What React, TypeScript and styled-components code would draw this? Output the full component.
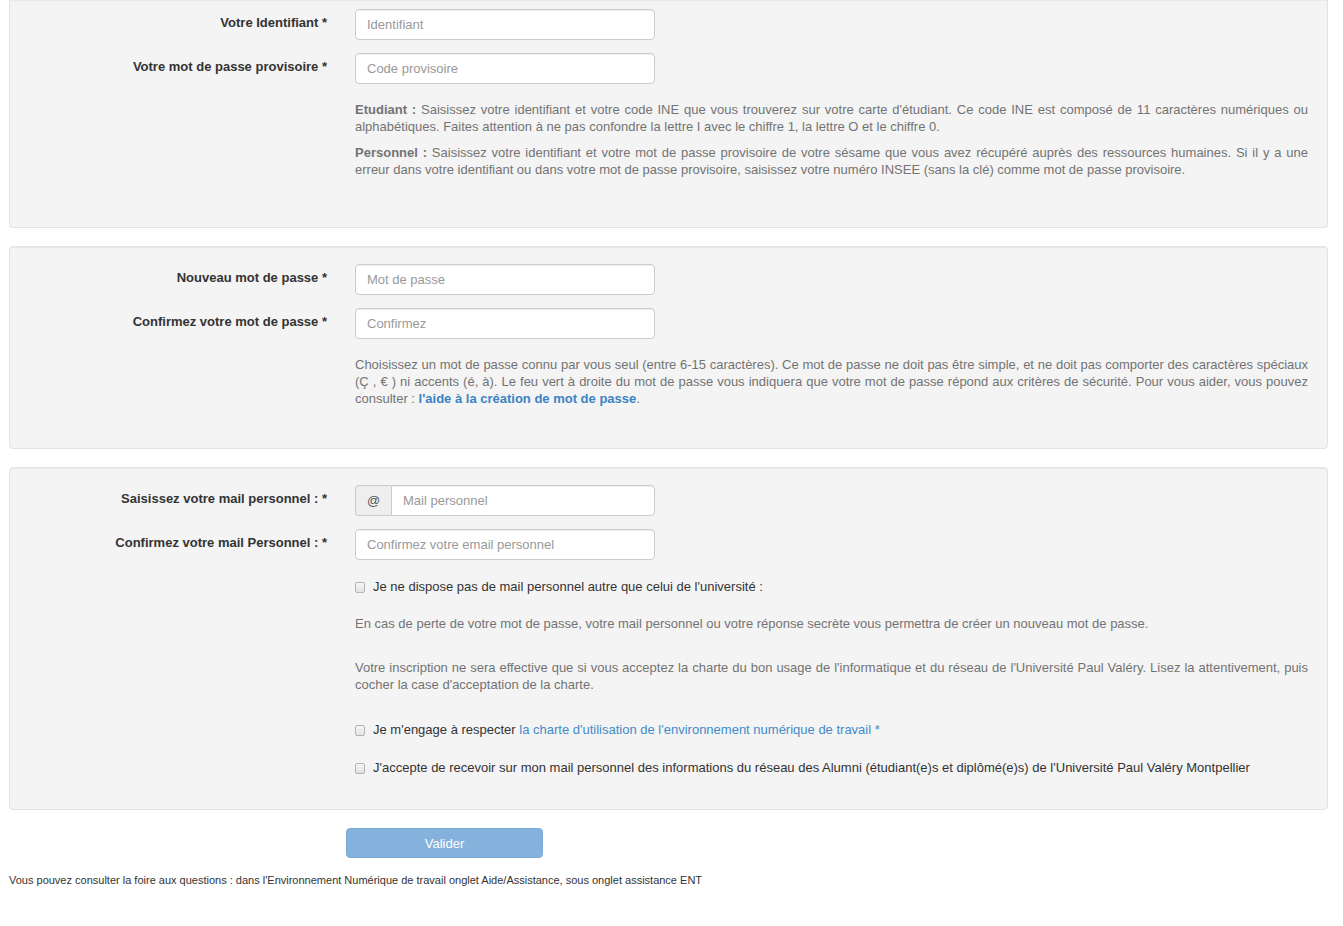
import React from "react";
import styled, { createGlobalStyle } from "styled-components";

const Global = createGlobalStyle`
  html, body { margin: 0; padding: 0; background: #fff; }
  body {
    font-family: "Liberation Sans", Arial, Helvetica, sans-serif;
    font-size: 13px;
    line-height: 17px;
    color: #333;
  }
  * { box-sizing: border-box; }
`;

const Page = styled.div`
  padding: 0 15px 0 9px;
`;

const Well = styled.div<{ $first?: boolean; $pb: number }>`
  background: #f4f4f4;
  border: 1px solid #e3e3e3;
  border-radius: 4px;
  box-shadow: inset 0 1px 1px rgba(0, 0, 0, 0.05);
  padding: 17px 19px ${(p) => p.$pb}px 19px;
  margin-bottom: 18px;
  ${(p) =>
    p.$first &&
    `
    border-top: none;
    border-top-left-radius: 0;
    border-top-right-radius: 0;
    padding-top: 9px;
  `}
`;

const Row = styled.div<{ $mb?: number }>`
  display: grid;
  grid-template-columns: 298px 1fr;
  column-gap: 28px;
  margin-bottom: ${(p) => (p.$mb ?? 13)}px;
`;

const Label = styled.label`
  text-align: right;
  font-weight: bold;
  color: #333;
  padding-top: 5px;
`;

const Input = styled.input`
  display: block;
  width: 300px;
  height: 31px;
  padding: 6px 11px;
  font-family: inherit;
  font-size: 13px;
  color: #555;
  background: #fff;
  border: 1px solid #ccc;
  border-radius: 4px;
  box-shadow: inset 0 1px 1px rgba(0, 0, 0, 0.075);
  outline: none;
  &::placeholder { color: #999; }
`;

const InputGroup = styled.div`
  display: flex;
  width: 300px;
  height: 31px;
`;

const Addon = styled.span`
  width: 36px;
  display: flex;
  align-items: center;
  justify-content: center;
  background: #eee;
  border: 1px solid #ccc;
  border-right: none;
  border-radius: 4px 0 0 4px;
  color: #555;
  font-size: 13px;
`;

const GroupInput = styled(Input)`
  flex: 1;
  width: auto;
  height: 31px;
  border-radius: 0 4px 4px 0;
`;

const Help = styled.div<{ $mt?: number; $mb?: number }>`
  grid-column: 2;
  color: #737373;
  text-align: justify;
  margin-top: ${(p) => p.$mt ?? 0}px;
  margin-bottom: ${(p) => p.$mb ?? 0}px;
`;

const P = styled.p<{ $mb?: number }>`
  margin: 0 0 ${(p) => p.$mb ?? 9}px 0;
`;

const Strong = styled.strong`
  font-weight: bold;
`;

const BoldLink = styled.a`
  color: #3a83c4;
  font-weight: bold;
  text-decoration: none;
`;

const Link = styled.a`
  color: #428bca;
  text-decoration: none;
`;

const CheckRow = styled.label<{ $mt: number }>`
  grid-column: 2;
  display: flex;
  align-items: center;
  margin-top: ${(p) => p.$mt}px;
  color: #333;
`;

const Check = styled.input`
  appearance: none;
  -webkit-appearance: none;
  width: 10px;
  height: 11px;
  margin: 2px 8px 0 0;
  flex: none;
  border: 1px solid #b4b4b4;
  border-radius: 2px;
  background: linear-gradient(#f6f6f6, #e2e2e2);
`;

const ButtonRow = styled.div`
  padding-left: 337px;
  margin-top: 1px;
`;

const Button = styled.button`
  width: 197px;
  height: 30px;
  font-family: inherit;
  font-size: 13px;
  color: #fff;
  background: #84b2dc;
  border: 1px solid #7aaad6;
  border-radius: 4px;
  cursor: not-allowed;
`;

const Footer = styled.p`
  font-size: 11px;
  line-height: 15px;
  color: #333;
  margin: 15px 0 0 0;
`;

export default function App() {
  return (
    <>
      <Global />
      <Page>
        <Well $first $pb={39}>
          <Row>
            <Label>Votre Identifiant *</Label>
            <Input placeholder="Identifiant" />
          </Row>
          <Row>
            <Label>Votre mot de passe provisoire *</Label>
            <Input placeholder="Code provisoire" />
          </Row>
          <Row $mb={0}>
            <Help $mt={4}>
              <P>
                <Strong>Etudiant :</Strong> Saisissez votre identifiant et votre code INE que vous trouverez sur votre carte d'étudiant. Ce code INE est composé de 11 caractères numériques ou alphabétiques. Faites attention à ne pas confondre la lettre I avec le chiffre 1, la lettre O et le chiffre 0.
              </P>
              <P $mb={10}>
                <Strong>Personnel :</Strong> Saisissez votre identifiant et votre mot de passe provisoire de votre sésame que vous avez récupéré auprès des ressources humaines. Si il y a une erreur dans votre identifiant ou dans votre mot de passe provisoire, saisissez votre numéro INSEE (sans la clé) comme mot de passe provisoire.
              </P>
            </Help>
          </Row>
        </Well>

        <Well $pb={31}>
          <Row>
            <Label>Nouveau mot de passe *</Label>
            <Input placeholder="Mot de passe" type="password" />
          </Row>
          <Row>
            <Label>Confirmez votre mot de passe *</Label>
            <Input placeholder="Confirmez" type="password" />
          </Row>
          <Row $mb={0}>
            <Help $mt={4}>
              <P $mb={10}>
                Choisissez un mot de passe connu par vous seul (entre 6-15 caractères). Ce mot de passe ne doit pas être simple, et ne doit pas comporter des caractères spéciaux (Ç , € ) ni accents (é, à). Le feu vert à droite du mot de passe vous indiquera que votre mot de passe répond aux critères de sécurité. Pour vous aider, vous pouvez consulter : <BoldLink href="#">l'aide à la création de mot de passe</BoldLink>.
              </P>
            </Help>
          </Row>
        </Well>

        <Well $pb={33}>
          <Row>
            <Label>Saisissez votre mail personnel : *</Label>
            <InputGroup>
              <Addon>@</Addon>
              <GroupInput placeholder="Mail personnel" />
            </InputGroup>
          </Row>
          <Row $mb={0}>
            <Label>Confirmez votre mail Personnel : *</Label>
            <Input placeholder="Confirmez votre email personnel" />
          </Row>
          <Row $mb={0}>
            <CheckRow $mt={18}>
              <Check type="checkbox" />
              Je ne dispose pas de mail personnel autre que celui de l'université :
            </CheckRow>
          </Row>
          <Row $mb={0}>
            <Help $mt={20}>
              <P $mb={0}>
                En cas de perte de votre mot de passe, votre mail personnel ou votre réponse secrète vous permettra de créer un nouveau mot de passe.
              </P>
            </Help>
          </Row>
          <Row $mb={0}>
            <Help $mt={27}>
              <P $mb={0}>
                Votre inscription ne sera effective que si vous acceptez la charte du bon usage de l'informatique et du réseau de l'Université Paul Valéry. Lisez la attentivement, puis cocher la case d'acceptation de la charte.
              </P>
            </Help>
          </Row>
          <Row $mb={0}>
            <CheckRow $mt={28}>
              <Check type="checkbox" />
              <span>
                Je m'engage à respecter <Link href="#">la charte d'utilisation de l'environnement numérique de travail *</Link>
              </span>
            </CheckRow>
          </Row>
          <Row $mb={0}>
            <CheckRow $mt={21}>
              <Check type="checkbox" />
              J'accepte de recevoir sur mon mail personnel des informations du réseau des Alumni (étudiant(e)s et diplômé(e)s) de l'Université Paul Valéry Montpellier
            </CheckRow>
          </Row>
        </Well>

        <ButtonRow>
          <Button disabled>Valider</Button>
        </ButtonRow>
        <Footer>
          Vous pouvez consulter la foire aux questions : dans l'Environnement Numérique de travail onglet Aide/Assistance, sous onglet assistance ENT
        </Footer>
      </Page>
    </>
  );
}
